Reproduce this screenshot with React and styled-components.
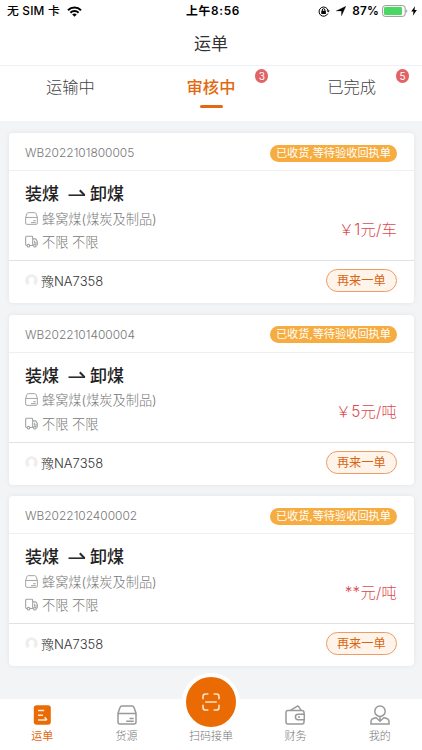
import React from 'react'
import styled, { createGlobalStyle } from 'styled-components'

const GlobalStyle = createGlobalStyle`
    *{
        box-sizing:border-box;
    }
    body{
        margin:0;
        background:#f3f4f6;
        font-family:Inter, 'Noto Sans CJK SC', sans-serif;
        color:#333;
    }
`

const orders = [
    { id: 'WB2022101800005', price: '￥1元/车' },
    { id: 'WB2022101400004', price: '￥5元/吨' },
    { id: 'WB2022102400002', price: '**元/吨' },
]

const WifiIcon = () => (
    <svg width="15" height="11" viewBox="0 0 15 11" fill="none" stroke="#000" strokeWidth="2">
        <path d="M1 4.2a9.3 9.3 0 0 1 13 0" />
        <path d="M3.4 6.7a5.8 5.8 0 0 1 8.2 0" />
        <path d="M7.5 10.8 5.2 8.5a3.3 3.3 0 0 1 4.6 0z" fill="#000" stroke="none" />
    </svg>
)

const LockIcon = () => (
    <svg width="12" height="11" viewBox="0 0 12 11" fill="none" stroke="#000">
        <path d="M9.8 7.6A4.6 4.6 0 1 1 10.2 5" strokeWidth="1" />
        <path d="M8.6 4.6h3.2l-1.6 2z" fill="#000" stroke="none" />
        <rect x="3.3" y="4.8" width="4.6" height="3.3" rx=".4" fill="#000" stroke="none" />
        <path d="M4.3 5V4a1.3 1.3 0 0 1 2.6 0v1" strokeWidth="1" />
    </svg>
)

const LocationIcon = () => (
    <svg width="10" height="10" viewBox="0 0 10 10">
        <path d="M9.8.3 5.5 9.8V4.9H.2z" fill="#000" stroke="#000" strokeWidth=".3" />
    </svg>
)

const BatteryIcon = () => (
    <svg width="26" height="12" viewBox="0 0 26 12">
        <rect x=".6" y=".6" width="22.6" height="10.8" rx="2.6" fill="none" stroke="#8c8c8c" strokeWidth=".9" />
        <rect x="2" y="2" width="18" height="8" rx="1.2" fill="#4cd763" />
        <path d="M24.3 4.2c1.3.4 1.3 3.2 0 3.6z" fill="#8c8c8c" />
    </svg>
)

const BoltIcon = () => (
    <svg width="6" height="10" viewBox="0 0 6 10">
        <path d="M4 .2.2 5.6h2.3L1.8 9.8 5.9 4.1H3.5z" fill="#000" />
    </svg>
)

const ArrowIcon = () => (
    <svg width="18" height="9" viewBox="0 0 18 9" fill="none" stroke="#2b2b2b" strokeWidth="1.6">
        <path d="M.5 6.2H17" />
        <path d="M11.8 1.3 16.6 6.2" strokeWidth="2" />
    </svg>
)

const GoodsIcon = ({ size }) => (
    <svg width={size} height={size} viewBox="0 0 20 20" fill="none" stroke="currentColor" strokeWidth="1.5">
        <path d="M1 8.2 3 2.4Q3.5 1 5 1h10q1.5 0 2 1.4l2 5.8V17q0 2-2 2H3q-2 0-2-2zM1 8.4h18" />
        <path d="M12.5 13.4h4.2M9.2 16.3h7.5" />
    </svg>
)

const TruckIcon = () => (
    <svg width="13" height="13" viewBox="0 0 20 20" fill="none" stroke="currentColor" strokeWidth="1.7">
        <path d="M3.2 16.2H2.4q-1.4 0-1.4-1.4V3.4Q1 2 2.4 2h8q1.4 0 1.4 1.4v12.8H7.6M11.8 6h4q1 0 1.5.9l1.7 3.4v4.5q0 1.4-1.5 1.4M14.8 9v3.2H19" />
        <circle cx="5.4" cy="16.4" r="2" />
        <circle cx="15.2" cy="16.4" r="2" />
    </svg>
)

const AvatarIcon = () => (
    <svg width="13" height="13" viewBox="0 0 13 13">
        <circle cx="6.5" cy="6.5" r="6.3" fill="#eee" />
        <path d="M2.6 11.4q.4-1.9 2.4-2.3Q3.6 7.6 3.7 5.4 4 3 6.5 3t2.8 2.4Q9.4 7.6 8 9.1q2 .4 2.4 2.3a6.3 6.3 0 0 1-7.8 0z" fill="#fff" />
    </svg>
)

const OrderIcon = () => (
    <svg width="20" height="20" viewBox="0 0 20 20">
        <rect x="1.8" y=".2" width="17" height="19.6" rx="2.8" fill="#ea6b03" />
        <path d="M6 5.6h6.2M6 10.3h5M6 15h8.8M12.6 12.2l2.4 2.8" fill="none" stroke="#ffe9d8" strokeWidth="1.5" />
    </svg>
)

const ScanIcon = () => (
    <svg width="18" height="18" viewBox="0 0 18 18" fill="none" stroke="#ffe3cc" strokeWidth="1.6" strokeLinecap="round">
        <path d="M1 5.8V3.6Q1 1 3.6 1h2.2M12.2 1h2.2Q17 1 17 3.6v2.2M17 12.2v2.2q0 2.6-2.6 2.6h-2.2M5.8 17H3.6Q1 17 1 14.4v-2.2M3.8 9h10.4" />
    </svg>
)

const WalletIcon = () => (
    <svg width="20" height="20" viewBox="0 0 20 20" fill="none" stroke="currentColor" strokeWidth="1.5">
        <path d="M19 9.3V7.6Q19 5.4 16.8 5.4H3Q1 5.4 1 7.6V17q0 2 2 2h14q2 0 2-2v-2.2" />
        <path d="M5.8 5.2 12 1.3q1-.5 1.7.4l2.3 3.5" />
        <path d="M19.3 9.3h-6.2q-2.7 0-2.7 2.7t2.7 2.7h6.2zM13 12h2" />
    </svg>
)

const UserIcon = () => (
    <svg width="20" height="20" viewBox="0 0 20 20" fill="none" stroke="currentColor" strokeWidth="1.5">
        <circle cx="10" cy="6.2" r="5.2" />
        <path d="M6.2 12.8Q1 13.4 1 16.6V19h18v-2.4q0-3.2-5.2-3.8L10 16.2zM10 11.8v4.7" />
    </svg>
)

const Order = ({ id, price }) => (
    <Card>
        <CardHead>
            <OrderNo>{id}</OrderNo>
            <Status>已收货,等待验收回执单</Status>
        </CardHead>
        <CardBody>
            <div>
                <Route>
                    <span>装煤</span>
                    <ArrowIcon />
                    <span>卸煤</span>
                </Route>
                <Detail><GoodsIcon size="13" />蜂窝煤(煤炭及制品)</Detail>
                <Detail><TruckIcon />不限 不限</Detail>
            </div>
            <Price>{price}</Price>
        </CardBody>
        <CardFoot>
            <Plate><AvatarIcon />豫NA7358</Plate>
            <AgainButton>再来一单</AgainButton>
        </CardFoot>
    </Card>
)

const App = () => {
    return (
        <>
            <GlobalStyle />
            <Screen>
                <StatusBar>
                    <StatusLeft><span>无 SIM 卡</span><WifiIcon /></StatusLeft>
                    <Clock>上午8:56</Clock>
                    <StatusRight>
                        <LockIcon />
                        <LocationIcon />
                        <Percent>87%</Percent>
                        <BatteryIcon />
                        <BoltIcon />
                    </StatusRight>
                </StatusBar>
                <Title>运单</Title>
                <Tabs>
                    <Tab>运输中</Tab>
                    <Tab $active>审核中<Badge>3</Badge></Tab>
                    <Tab>已完成<Badge>5</Badge></Tab>
                </Tabs>
                <List>
                    {orders.map(order => <Order key={order.id} {...order} />)}
                </List>
                <BottomNav>
                    <NavItem $active><OrderIcon />运单</NavItem>
                    <NavItem><GoodsIcon size="20" />货源</NavItem>
                    <NavItem>
                        <ScanButton><ScanIcon /></ScanButton>
                        扫码接单
                    </NavItem>
                    <NavItem><WalletIcon />财务</NavItem>
                    <NavItem><UserIcon />我的</NavItem>
                </BottomNav>
            </Screen>
        </>
    )
}

const Screen = styled.div`
    height:750px;
    display:flex;
    flex-direction:column;
    overflow:hidden;
`

const StatusBar = styled.header`
    display:grid;
    grid-template-columns:1fr auto 1fr;
    align-items:center;
    height:22px;
    padding:0 5px 0 7px;
    background:#fff;
    color:#000;
    font-size:11.8px;
    font-weight:500;
    line-height:22px;
`

const StatusLeft = styled.div`
    display:flex;
    align-items:center;
    gap:7px;
    letter-spacing:.2px;
`

const Clock = styled.div`
    padding-left:2px;
    font-weight:600;
    letter-spacing:.7px;
`

const StatusRight = styled.div`
    display:flex;
    align-items:center;
    justify-content:flex-end;
    gap:6px;
    svg:last-child{
        margin-left:-3px;
    }
`

const Percent = styled.span`
    margin-right:-3px;
    font-weight:600;
    letter-spacing:.2px;
`

const Title = styled.h1`
    flex:none;
    height:43px;
    margin:0;
    padding-top:1px;
    background:#fff;
    font-size:17px;
    font-weight:400;
    line-height:43px;
    text-align:center;
`

const Tabs = styled.nav`
    flex:none;
    display:flex;
    height:56px;
    border-top:1px solid #edf0f4;
    background:#fff;
`

const Tab = styled.div`
    position:relative;
    flex:1;
    padding-top:8px;
    text-align:center;
    font-size:16.3px;
    line-height:26px;
    font-weight:${props => props.$active ? 500 : 300};
    color:${props => props.$active ? '#e2690f' : '#444'};
    &::after{
        content:'';
        display:${props => props.$active ? 'block' : 'none'};
        width:23px;
        height:3px;
        margin:5px auto 0;
        border-radius:2px;
        background:#e2690f;
    }
`

const Badge = styled.span`
    position:absolute;
    top:3px;
    right:13px;
    width:13px;
    height:14px;
    border-radius:7px;
    background:#e26366;
    color:#fff;
    font-size:10px;
    font-weight:400;
    line-height:14px;
`

const List = styled.main`
    flex:1;
    min-height:0;
    display:flex;
    flex-direction:column;
    gap:11.5px;
    padding:12px 8px 0 8.5px;
`

const Card = styled.article`
    flex:none;
    height:170px;
    border-radius:4px;
    background:#fff;
    box-shadow:0 0 5px rgba(0,0,0,.07);
`

const CardHead = styled.div`
    display:flex;
    align-items:center;
    justify-content:space-between;
    height:38px;
    padding:3px 17px 0 16.5px;
    border-bottom:1px solid #efefef;
`

const OrderNo = styled.span`
    margin-top:-1px;
    font-size:11.95px;
    font-weight:300;
    color:#777;
`

const Status = styled.span`
    height:17px;
    padding:0 6px;
    border-radius:9px;
    background:#f6ac3e;
    color:#fff;
    font-size:11.2px;
    font-weight:400;
    line-height:17px;
`

const CardBody = styled.div`
    display:flex;
    justify-content:space-between;
    height:90px;
    padding:10px 17px 0 16.5px;
    border-bottom:1px solid #e2e2e2;
`

const Route = styled.h2`
    display:flex;
    align-items:center;
    margin:0;
    font-size:17px;
    font-weight:500;
    line-height:26px;
    color:#222;
    svg{
        margin:0 4px 1px 9px;
    }
`

const Detail = styled.div`
    display:flex;
    align-items:center;
    gap:4px;
    height:23px;
    margin-top:-.5px;
    font-size:13.2px;
    font-weight:300;
    color:#777;
    & + &{
        margin-top:.5px;
    }
    svg{
        color:#a2a2a2;
    }
`

const Price = styled.div`
    align-self:flex-start;
    margin-top:37px;
    font-size:15.3px;
    font-weight:300;
    line-height:24px;
    letter-spacing:.2px;
    color:#dc4a50;
`

const CardFoot = styled.div`
    display:flex;
    align-items:center;
    justify-content:space-between;
    height:39.5px;
    padding:0 17px 0 16.5px;
`

const Plate = styled.div`
    display:flex;
    align-items:center;
    gap:3px;
    font-size:13px;
    font-weight:300;
    color:#333;
`

const AgainButton = styled.button`
    width:71.5px;
    height:23px;
    padding:0;
    border:1px solid #ec9c66;
    border-radius:12px;
    background:#fff4ea;
    color:#d9650f;
    font-family:inherit;
    font-size:12.2px;
    font-weight:400;
    line-height:21px;
`

const BottomNav = styled.nav`
    flex:none;
    display:flex;
    height:51px;
    background:#fff;
`

const NavItem = styled.div`
    flex:1;
    display:flex;
    flex-direction:column;
    align-items:center;
    justify-content:flex-end;
    gap:2px;
    padding-bottom:5px;
    font-size:11px;
    font-weight:${props => props.$active ? 400 : 300};
    line-height:18px;
    color:${props => props.$active ? '#e2690f' : '#777'};
    svg{
        color:#999;
    }
`

const ScanButton = styled.div`
    flex:none;
    display:flex;
    align-items:center;
    justify-content:center;
    width:58px;
    height:58px;
    margin-bottom:-6px;
    border:4px solid #fff;
    border-radius:50%;
    background:#ea6b03;
`

export default App
